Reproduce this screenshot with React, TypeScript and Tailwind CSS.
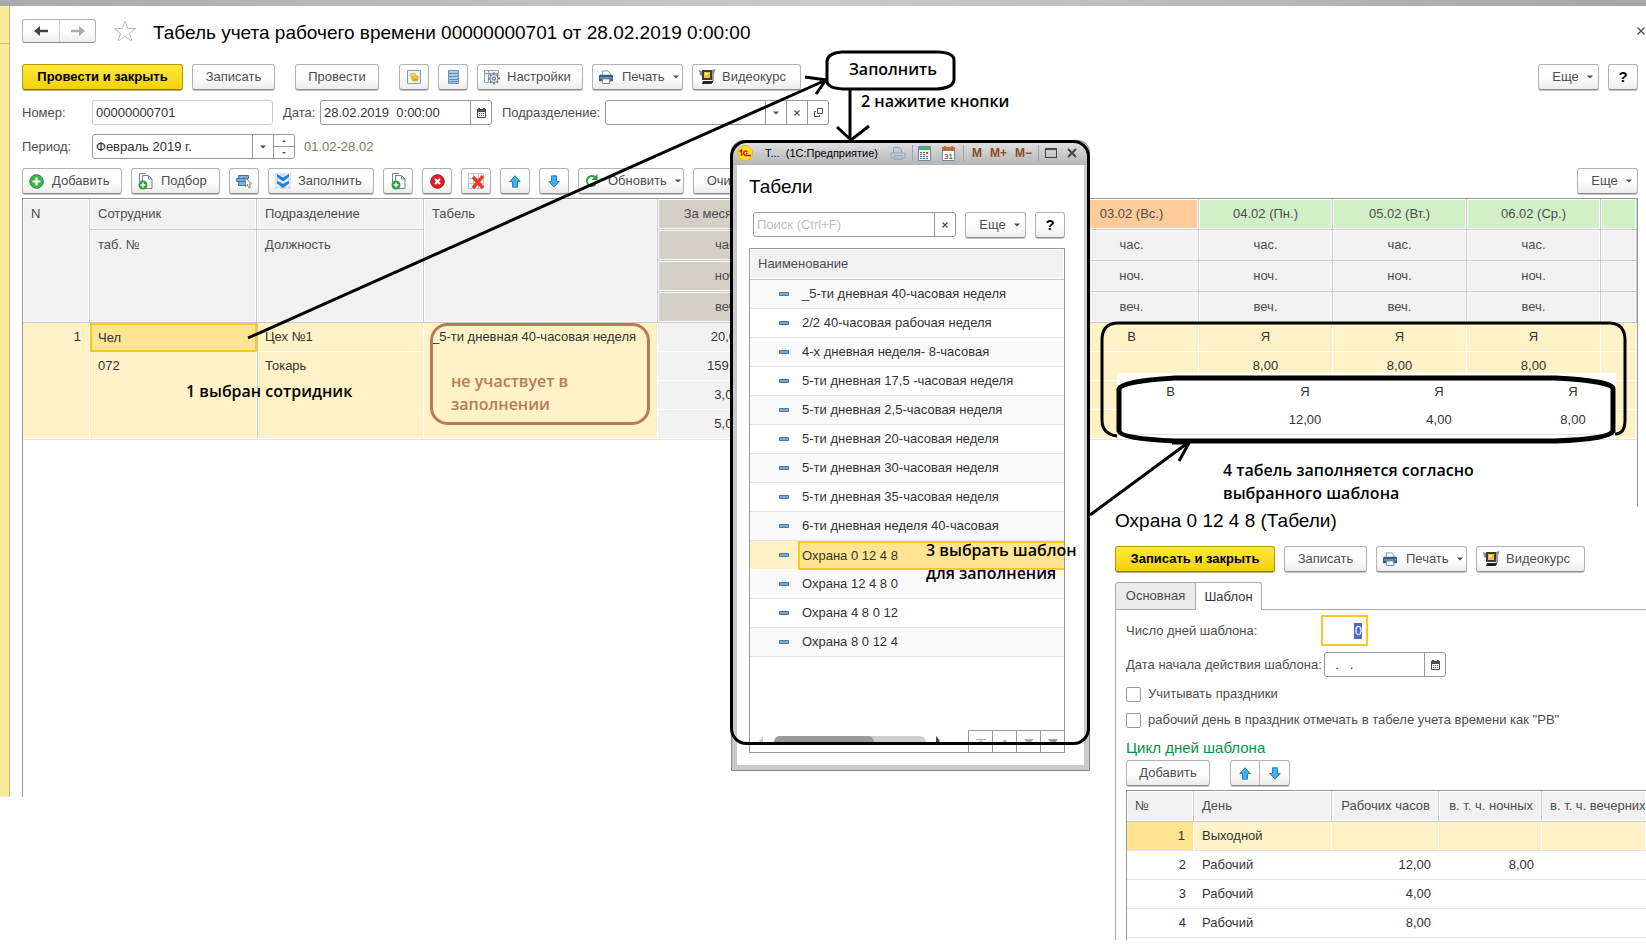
import { ReactNode } from "react";

const templates = [
    "_5-ти дневная 40-часовая неделя",
    "2/2 40-часовая рабочая неделя",
    "4-х дневная неделя- 8-часовая",
    "5-ти дневная 17,5 -часовая неделя",
    "5-ти дневная 2,5-часовая неделя",
    "5-ти дневная 20-часовая неделя",
    "5-ти дневная 30-часовая неделя",
    "5-ти дневная 35-часовая неделя",
    "6-ти дневная неделя 40-часовая",
    "Охрана 0 12 4 8",
    "Охрана 12 4 8 0",
    "Охрана 4 8 0 12",
    "Охрана 8 0 12 4",
];

// the first two days are fully covered by the dialog
const days = [
    { title: "", color: "bg-[#d2f0c8]", code: "", hours: "" },
    { title: "", color: "bg-[#ffcc99]", code: "", hours: "" },
    { title: "03.02 (Вс.)", color: "bg-[#ffcc99]", code: "В", hours: "" },
    { title: "04.02 (Пн.)", color: "bg-[#d2f0c8]", code: "Я", hours: "8,00" },
    { title: "05.02 (Вт.)", color: "bg-[#d2f0c8]", code: "Я", hours: "8,00" },
    { title: "06.02 (Ср.)", color: "bg-[#d2f0c8]", code: "Я", hours: "8,00" },
    { title: "", color: "bg-[#d2f0c8]", code: "", hours: "" },
];

const cycle = [
    { n: 1, day: "Выходной", hours: "", night: "" },
    { n: 2, day: "Рабочий", hours: "12,00", night: "8,00" },
    { n: 3, day: "Рабочий", hours: "4,00", night: "" },
    { n: 4, day: "Рабочий", hours: "8,00", night: "" },
];

const head = "border-r border-b border-[#c8c8c8] font-normal text-[#4d4d4d] shadow-[inset_0_0_0_1px_white]";
const body = "border-r border-b border-white bg-[#fff2c7] text-[#333]";
const note = "absolute whitespace-nowrap font-['Open_Sans',sans-serif] text-[16px] leading-[23px] font-semibold";

function Btn({ children, className = "", label }: { children: ReactNode; className?: string; label?: string }) {
    return (
        <button
            type="button"
            aria-label={label}
            className={`flex h-[26px] shrink-0 items-center justify-center gap-2 whitespace-nowrap rounded-[3px] border border-[#b3b3b3] border-b-[#8c8c8c] bg-linear-to-b from-white from-50% to-[#ececec] text-[#4d4d4d] shadow-[0_1px_0_#c4c4c4] ${className}`}
        >
            {children}
        </button>
    );
}

function IconBtn({ icon, children, className = "" }: { icon: ReactNode; children: ReactNode; className?: string }) {
    return (
        <button
            type="button"
            className={`flex h-[26px] shrink-0 items-center gap-2 whitespace-nowrap rounded-[3px] border border-[#b3b3b3] border-b-[#8c8c8c] bg-linear-to-b from-white from-50% to-[#ececec] pl-[6px] text-[#4d4d4d] shadow-[0_1px_0_#c4c4c4] ${className}`}
        >
            <span className="-mr-2 w-[23px]">{icon}</span>
            {children}
        </button>
    );
}

function MainBtn({ children, className = "" }: { children: ReactNode; className?: string }) {
    return (
        <button
            type="button"
            className={`h-[26px] shrink-0 whitespace-nowrap rounded-[3px] border border-[#b39b00] border-b-[#8c7a00] bg-linear-to-b from-[#ffe838] to-[#f2d200] font-bold text-black shadow-[0_1px_0_#b8ae70] ${className}`}
        >
            {children}
        </button>
    );
}

function Caret() {
    return (
        <svg width="6" height="4" viewBox="0 0 6 4" className="shrink-0">
            <path d="M0 0.5h6L3 3.5z" fill="#4d4d4d" />
        </svg>
    );
}

function CalendarIcon() {
    return (
        <svg width="9" height="10" viewBox="0 0 9 10" className="shrink-0">
            <path d="M.5 2.500h8v7h-8z" fill="white" stroke="#4d4d4d" />
            <path d="M0 1h9v3H0zM1 0h2v2H1zM6 0h2v2H6z" fill="#4d4d4d" />
            <path d="M2 5h1v1H2zM4 5h1v1H4zM6 5h1v1H6zM2 7h1v1H2zM4 7h1v1H4zM6 7h1v1H6z" fill="#4d4d4d" />
        </svg>
    );
}

function CrossIcon() {
    return (
        <svg width="6" height="6" viewBox="0 0 6 6" className="shrink-0">
            <path d="M.5.5l5 5M5.5.5l-5 5" stroke="#4d4d4d" strokeWidth="1.200" />
        </svg>
    );
}

function PrinterIcon() {
    return (
        <svg width="14" height="14" viewBox="0 0 15 15" className="block">
            <path d="M3.500 6V1h6l2.500 2.500V6" fill="white" stroke="#7f96a8" />
            <path d="M1.500 5h12Q15 5 15 6.500V12H0V6.500Q0 5 1.500 5z" fill="#33608a" />
            <path d="M1 8h13v1H1z" fill="#9dbbd3" />
            <path d="M3.500 9.500h8v5h-8z" fill="white" stroke="#5f7f99" />
        </svg>
    );
}

function VideoIcon() {
    return (
        <svg width="17" height="16" viewBox="0 0 17 16" className="block">
            <path d="M0 1l3 1v5L1 6zM16.500 0L13 1v5l2-1z" fill="#8d8d8d" />
            <path d="M3 1h10v10H3z" fill="#3a3a3a" />
            <path d="M5 3h6v6H5z" fill="#f4c21c" />
            <path d="M6 4h3v2H6z" fill="#fff1a8" />
            <path d="M4 12h9l1-1v2l-1.500 2H3z" fill="#222" />
            <path d="M13 3h2v9h-2z" fill="#9a9a9a" />
        </svg>
    );
}

function ArrowIcon({ down }: { down?: boolean }) {
    return (
        <svg width="12" height="13" viewBox="0 0 12 13" className={down ? "shrink-0 rotate-180" : "shrink-0"}>
            <path d="M6 .8l5.200 5.700H8.500v5.700h-5V6.500H.8z" fill="#3fb0f0" stroke="#2a83bd" />
        </svg>
    );
}

function PlusCircle() {
    return (
        <svg width="15" height="15" viewBox="0 0 15 15" className="block">
            <circle cx="7.500" cy="7.500" r="6.800" fill="#3cb54a" stroke="#23883a" />
            <path d="M7.500 3.500v8M3.500 7.500h8" stroke="white" strokeWidth="2.200" />
        </svg>
    );
}

function DocPlusIcon() {
    return (
        <svg width="15" height="17" viewBox="0 0 15 17" className="block">
            <path d="M1.500 9V.5H8M4.500 12V2.500h6l3.500 3.500v9.500H7" fill="none" stroke="#6b87a0" />
            <path d="M10.500 2.500V6H14" fill="none" stroke="#6b87a0" />
            <circle cx="5" cy="12" r="4.500" fill="#2f9e41" />
            <path d="M5 9.500v5M2.500 12h5" stroke="white" strokeWidth="1.500" />
        </svg>
    );
}

function CopyRowsIcon() {
    return (
        <svg width="16" height="15" viewBox="0 0 16 15" className="shrink-0">
            <path d="M2.500 1.500h10v3h-10zM.5 4.500h11v3H.5zM2.500 7.500h9v4h-9z" fill="#7fb0d8" stroke="#3c739f" />
            <path d="M9.500 3.500v9l2-2 1.500 3.500 1.500-.7-1.500-3.300h2.500z" fill="white" stroke="#777" strokeWidth=".8" />
        </svg>
    );
}

function FillIcon() {
    return (
        <svg width="16" height="16" viewBox="0 0 16 16" className="block">
            <path d="M0 0h16v16H0z" fill="#d5dcef" />
            <path d="M4 0v16M12 0v16M0 4h16M0 8h16M0 12h16" stroke="white" />
            <path d="M2 1l6 3.500L14 1v3L8 8.500 2 4zM2 7.500l6 3.500 6-3.500v3L8 15 2 10.500z" fill="#1d82e0" />
        </svg>
    );
}

function DeleteIcon() {
    return (
        <svg width="15" height="15" viewBox="0 0 15 15" className="shrink-0">
            <circle cx="7.500" cy="7.500" r="6.800" fill="#d9222c" stroke="#a3131c" />
            <path d="M5 5l5 5M10 5l-5 5" stroke="white" strokeWidth="2" />
        </svg>
    );
}

function ClearGridIcon() {
    return (
        <svg width="17" height="16" viewBox="0 0 17 16" className="shrink-0">
            <path d="M.5.5h15v15H.5zM5.500.5v15M10.500.5v15M.5 5.500h15M.5 10.500h15" fill="#f4f6fb" stroke="#b9c4d9" />
            <path d="M5 4l10 11M15 3L5 15" stroke="#ee3a22" strokeWidth="3.500" />
        </svg>
    );
}

function CoinsIcon() {
    return (
        <svg width="14" height="14" viewBox="0 0 14 14" className="shrink-0">
            <path d="M.5.5h13v13H.5z" fill="#eef5fa" stroke="#7f9db5" />
            <ellipse cx="8" cy="9.500" rx="3.500" ry="1.800" fill="#e6a41b" />
            <ellipse cx="8" cy="7.500" rx="3.500" ry="1.700" fill="#f5c73d" stroke="#cf8f18" strokeWidth=".6" />
            <ellipse cx="6" cy="5" rx="3.200" ry="1.700" fill="#ffd95a" stroke="#cf8f18" strokeWidth=".6" />
        </svg>
    );
}

function ListIcon() {
    return (
        <svg width="11" height="14" viewBox="0 0 11 14" className="shrink-0">
            <path d="M.5.5h10v13H.5z" fill="#a9cbe6" stroke="#6d93b3" />
            <path d="M1 3.500h9M1 6.500h9M1 9.500h9M1 11.500h9" stroke="#5f8cb3" />
        </svg>
    );
}

function SettingsIcon() {
    return (
        <svg width="17" height="16" viewBox="0 0 17 16" className="block">
            <path d="M.5 1.500h4v12h-4zM.5 1.500h14v3H.5z" fill="#eef3f8" stroke="#8ea5bd" />
            <path d="M10 3.500v12M4 9.500h12M5.800 5.300l8.400 8.400M14.200 5.300l-8.400 8.400" stroke="#6f7f91" strokeWidth="2" />
            <circle cx="10" cy="9.500" r="4" fill="white" stroke="#6f7f91" />
            <circle cx="10" cy="9.500" r="1.600" fill="white" stroke="#6f7f91" strokeWidth="1.400" />
        </svg>
    );
}

function RefreshIcon() {
    return (
        <svg width="14" height="14" viewBox="0 0 14 14" className="block">
            <path d="M10.500 10.500A5 5 0 1 1 10 3" fill="none" stroke="#27a13c" strokeWidth="2" />
            <path d="M12.500 0v6h-6z" fill="#27a13c" />
        </svg>
    );
}

function ElementIcon() {
    return (
        <svg width="10" height="4" viewBox="0 0 10 4" className="block">
            <path d="M.5.5h9v3h-9z" fill="#79abd6" stroke="#44759c" />
        </svg>
    );
}

function Field({ id, value, width, light, children }: { id: string; value: string; width: string; light?: boolean; children?: ReactNode }) {
    return (
        <div className={`flex h-[25px] shrink-0 overflow-hidden rounded-[3px] border bg-white ${light ? "border-[#ccc]" : "border-[#999]"}`}>
            <input id={id} defaultValue={value} className={`min-w-0 bg-transparent px-[3px] text-[#333] outline-none ${width}`} />
            {children}
        </div>
    );
}

function FieldBtn({ children, label }: { children: ReactNode; label: string }) {
    return (
        <button type="button" aria-label={label} className="flex w-[21px] shrink-0 items-center justify-center border-l border-[#999]">
            {children}
        </button>
    );
}

function TimesheetTable() {
    return (
        <table className="w-full table-fixed border-separate border-spacing-0">
            <colgroup>
                <col className="w-[67px]" />
                <col className="w-[167px]" />
                <col className="w-[167px]" />
                <col className="w-[234px]" />
                <col className="w-[139px]" />
                <col className="w-[134px]" />
                <col className="w-[134px]" />
                <col className="w-[134px]" />
                <col className="w-[134px]" />
                <col className="w-[134px]" />
                <col className="w-[134px]" />
                <col />
            </colgroup>
            <thead>
                <tr className="h-[31px]">
                    <th rowSpan={4} className={`${head} bg-[#f1f1f1] px-2 pt-[7px] text-left align-top`}>N</th>
                    <th className={`${head} bg-[#f1f1f1] px-2 text-left`}>Сотрудник</th>
                    <th className={`${head} bg-[#f1f1f1] px-2 text-left`}>Подразделение</th>
                    <th rowSpan={4} className={`${head} bg-[#f1f1f1] px-2 pt-[7px] text-left align-top`}>Табель</th>
                    <th className={`${head} bg-[#d4cfc7]`}>За месяц (дн.)</th>
                    {days.map((d, i) => (
                        <th key={i} className={`${head} ${d.color}`}>{d.title}</th>
                    ))}
                </tr>
                {["час.", "ноч.", "веч."].map((t, row) => (
                    <tr key={t} className="h-[31px]">
                        {row === 0 && (
                            <>
                                <th rowSpan={3} className={`${head} bg-[#f1f1f1] px-2 pt-[7px] text-left align-top`}>таб. №</th>
                                <th rowSpan={3} className={`${head} bg-[#f1f1f1] px-2 pt-[7px] text-left align-top`}>Должность</th>
                            </>
                        )}
                        <th className={`${head} bg-[#d4cfc7]`}>{t}</th>
                        {days.map((d, i) => (
                            <th key={i} className={`${head} bg-[#f1f1f1]`}>{d.title ? t : ""}</th>
                        ))}
                    </tr>
                ))}
            </thead>
            <tbody>
                <tr className="h-[29px]">
                    <td rowSpan={4} className={`${body} px-2 pt-[6px] text-right align-top`}>1</td>
                    <td className="border-2 border-[#fbc91d] bg-[#ffe591] px-[6px] text-[#333]">Чел</td>
                    <td className={`${body} border-l border-l-[#c8c8c8] px-[7px]`}>Цех №1</td>
                    <td rowSpan={4} className={`${body} px-2 pt-[6px] align-top`}>_5-ти дневная 40-часовая неделя</td>
                    <td className="border-r border-b border-white bg-[#f2f2f2] text-center text-[#333]">20,00</td>
                    {days.map((d, i) => (
                        <td key={i} className={`${body} text-center`}>{d.code}</td>
                    ))}
                </tr>
                {["159,00", "3,00", "5,00"].map((t, row) => (
                    <tr key={t} className="h-[29px]">
                        {row === 0 && (
                            <>
                                <td rowSpan={3} className={`${body} px-2 pt-[6px] align-top`}>072</td>
                                <td rowSpan={3} className={`${body} border-l border-l-[#c8c8c8] px-[7px] pt-[6px] align-top`}>Токарь</td>
                            </>
                        )}
                        <td className="border-r border-b border-white bg-[#f2f2f2] text-center text-[#333]">{t}</td>
                        {days.map((d, i) => (
                            <td key={i} className={`${body} text-center`}>{row === 0 ? d.hours : ""}</td>
                        ))}
                    </tr>
                ))}
            </tbody>
        </table>
    );
}

function MainWindow() {
    return (
        <div className="flex h-[791px]">
            <div className="w-[10px] shrink-0 border-r border-[#c9bd6c] bg-[#fbeb9e]">
                <div className="h-[38px] border-b border-[#c9bd6c]" />
            </div>
            <main className="flex min-w-0 grow flex-col pt-3 pr-2 pl-3">
                <div className="flex h-[26px] items-center">
                    <div className="flex h-6 rounded-[3px] border border-[#b3b3b3] border-b-[#8c8c8c] bg-linear-to-b from-white from-50% to-[#ececec]">
                        <button type="button" aria-label="Назад" className="flex w-[36px] items-center justify-center">
                            <svg width="14" height="10" viewBox="0 0 14 10">
                                <path d="M0 5l6-5v3.800h8v2.400H6V10z" fill="#444" />
                            </svg>
                        </button>
                        <button type="button" aria-label="Вперед" className="flex w-[36px] items-center justify-center border-l border-[#ccc]">
                            <svg width="14" height="10" viewBox="0 0 14 10">
                                <path d="M14 5L8 0v3.800H0v2.400h8V10z" fill="#aaa" />
                            </svg>
                        </button>
                    </div>
                    <svg width="24" height="22" viewBox="0 0 24 22" className="ml-[17px]">
                        <path d="M12 1l2.800 7.500h8L16.500 13.200l2.400 7.800-6.900-4.700-6.900 4.700 2.400-7.800L1.200 8.500h8z" fill="white" stroke="#b4b9c2" />
                    </svg>
                    <h1 className="ml-4 whitespace-nowrap pt-1 text-[19px] text-black">Табель учета рабочего времени 00000000701 от 28.02.2019 0:00:00</h1>
                    <button type="button" aria-label="Закрыть" className="-mr-2 ml-auto flex size-[10px] items-center justify-center">
                        <svg width="8" height="8" viewBox="0 0 8 8">
                            <path d="M.5.5l7 7M7.500.5l-7 7" stroke="#4d4d4d" strokeWidth="1.300" />
                        </svg>
                    </button>
                </div>

                <div className="mt-5 flex gap-[9px]">
                    <MainBtn className="w-[161px]">Провести и закрыть</MainBtn>
                    <Btn className="w-[83px]">Записать</Btn>
                    <Btn className="ml-[11px] w-[84px]">Провести</Btn>
                    <Btn className="ml-[11px] w-[30px]" label="Начисления"><CoinsIcon /></Btn>
                    <Btn className="w-[30px]" label="Список"><ListIcon /></Btn>
                    <IconBtn className="w-[106px]" icon={<SettingsIcon />}>Настройки</IconBtn>
                    <IconBtn className="w-[91px]" icon={<PrinterIcon />}>Печать<Caret /></IconBtn>
                    <IconBtn className="w-[109px]" icon={<VideoIcon />}>Видеокурс</IconBtn>
                    <Btn className="ml-auto w-[61px] pl-2">Еще<Caret /></Btn>
                    <Btn className="w-[30px] text-[15px] font-bold text-black">?</Btn>
                </div>

                <div className="mt-[10px] flex items-center text-[#4d4d4d]">
                    <label htmlFor="number" className="w-[70px]">Номер:</label>
                    <Field id="number" value="00000000701" width="w-[179px]" light />
                    <label htmlFor="date" className="ml-[10px] w-[37px]">Дата:</label>
                    <Field id="date" value="28.02.2019  0:00:00" width="w-[149px]">
                        <FieldBtn label="Выбрать дату"><CalendarIcon /></FieldBtn>
                    </Field>
                    <label htmlFor="dept" className="ml-[10px] w-[103px]">Подразделение:</label>
                    <Field id="dept" value="" width="w-[159px]">
                        <FieldBtn label="Выбрать"><Caret /></FieldBtn>
                        <FieldBtn label="Очистить"><CrossIcon /></FieldBtn>
                        <FieldBtn label="Открыть">
                            <svg width="9" height="9" viewBox="0 0 9 9">
                                <path d="M3.500.5h5v5h-5zM2 3.500H.5v5h5V7" fill="none" stroke="#4d4d4d" />
                            </svg>
                        </FieldBtn>
                    </Field>
                </div>

                <div className="mt-[9px] flex items-center text-[#4d4d4d]">
                    <label htmlFor="period" className="w-[70px]">Период:</label>
                    <Field id="period" value="Февраль 2019 г." width="w-[159px]">
                        <FieldBtn label="Выбрать период"><Caret /></FieldBtn>
                        <div className="flex w-[21px] flex-col border-l border-[#999]">
                            <button type="button" aria-label="Следующий" className="flex grow items-center justify-center border-b border-[#999]">
                                <svg width="4" height="2" viewBox="0 0 4 2"><path d="M0 2h4L2 0z" fill="#4d4d4d" /></svg>
                            </button>
                            <button type="button" aria-label="Предыдущий" className="flex grow items-center justify-center">
                                <svg width="4" height="2" viewBox="0 0 4 2"><path d="M0 0h4L2 2z" fill="#4d4d4d" /></svg>
                            </button>
                        </div>
                    </Field>
                    <span className="ml-[9px] text-[#7f7a50]">01.02-28.02</span>
                </div>

                <div className="mt-[9px] flex gap-[9px]">
                    <IconBtn className="w-[100px]" icon={<PlusCircle />}>Добавить</IconBtn>
                    <IconBtn className="w-[89px]" icon={<DocPlusIcon />}>Подбор</IconBtn>
                    <Btn className="w-[30px]" label="Выбрать строки"><CopyRowsIcon /></Btn>
                    <IconBtn className="w-[106px]" icon={<FillIcon />}>Заполнить</IconBtn>
                    <Btn className="w-[30px]" label="Скопировать"><DocPlusIcon /></Btn>
                    <Btn className="w-[30px]" label="Удалить"><DeleteIcon /></Btn>
                    <Btn className="w-[30px]" label="Очистить таблицу"><ClearGridIcon /></Btn>
                    <Btn className="w-[30px]" label="Вверх"><ArrowIcon /></Btn>
                    <Btn className="w-[30px]" label="Вниз"><ArrowIcon down /></Btn>
                    <IconBtn className="w-[106px]" icon={<RefreshIcon />}>Обновить<Caret /></IconBtn>
                    <Btn className="w-[84px]">Очистить</Btn>
                    <Btn className="ml-auto w-[61px] pl-2">Еще<Caret /></Btn>
                </div>

                <div className="mt-1 min-h-0 grow overflow-hidden border-x border-t border-[#999]">
                    <TimesheetTable />
                    <div className="border-t border-[#e6e6e6]" />
                </div>
            </main>
        </div>
    );
}

function TemplatesDialog() {
    return (
        <section className="absolute top-[140px] left-[731px] flex h-[631px] w-[359px] flex-col rounded-t-xl border border-[#8a8a8a] bg-[#c9cacc] px-[5px] pb-[5px]">
            <div className="-mx-[5px] flex h-6 shrink-0 items-center rounded-t-xl bg-linear-to-b from-[#e4e4e5] to-[#b3b4b7] pl-[5px] text-[12px] text-black">
                <svg width="16" height="16" viewBox="0 0 16 16" className="shrink-0">
                    <circle cx="8" cy="8" r="7.500" fill="#fde02f" stroke="#e9b51c" />
                    <path d="M2.500 6.500L4.500 5v6M10.500 6.500A2.300 2.300 0 1 0 9 10.500h5M10.500 8.500H9" fill="none" stroke="#e31b1b" strokeWidth="1.500" />
                </svg>
                <span className="ml-3 w-[111px] shrink-0 whitespace-pre text-[11px]">Т...  (1С:Предприятие)</span>
                <svg width="16" height="14" viewBox="0 0 16 14" className="ml-[14px] shrink-0">
                    <path d="M3.500 7V1.500h6l2 2V7M1 7h14v5H1zM4 9.500h8v4H4z" fill="#c3cad3" stroke="#98a6b5" />
                </svg>
                <span className="ml-[6px] h-4 w-px bg-[#a3a3a3]" />
                <svg width="13" height="15" viewBox="0 0 13 15" className="ml-[5px] shrink-0">
                    <path d="M.5.5h12v14H.5z" fill="#eef2f4" stroke="#6f8a9d" />
                    <path d="M1 1h11v3H1z" fill="#3fbf4b" />
                    <path d="M2 6h2v1H2zM5 6h2v1H5zM2 8h2v1H2zM5 8h2v1H5zM2 10h2v1H2zM5 10h2v1H5zM8 10h2v1H8zM2 12h2v1H2zM5 12h2v1H5zM8 12h2v1H8z" fill="#4c6a80" />
                    <path d="M8 6h2v2H8z" fill="#e33" />
                </svg>
                <svg width="13" height="15" viewBox="0 0 13 15" className="ml-[11px] shrink-0">
                    <path d="M.5 1.500h12v13H.5z" fill="white" stroke="#6f8a9d" />
                    <path d="M0 1h13v4H0zM2 0h2v2H2zM9 0h2v2H9z" fill="#b76f3c" />
                    <text x="6.500" y="12.500" textAnchor="middle" fontSize="8" fill="#333">31</text>
                </svg>
                <span className="ml-[8px] h-4 w-px bg-[#a3a3a3]" />
                <div className="ml-2 flex gap-2 font-bold text-[#8a4b20]">
                    <span>M</span>
                    <span>M+</span>
                    <span>M−</span>
                </div>
                <span className="ml-[6px] h-4 w-px bg-[#a3a3a3]" />
                <button type="button" aria-label="Развернуть" className="ml-[6px] h-[10px] w-3 shrink-0 border border-t-2 border-[#444]" />
                <button type="button" aria-label="Закрыть окно" className="ml-[10px] shrink-0">
                    <svg width="10" height="10" viewBox="0 0 10 10">
                        <path d="M1 1l8 8M9 1L1 9" stroke="#444" strokeWidth="2" />
                    </svg>
                </button>
            </div>

            <div className="flex min-h-0 grow flex-col bg-white px-3 pt-[10px] pb-3">
                <h2 className="text-[19px] leading-6 text-black">Табели</h2>
                <div className="mt-[13px] flex pl-1">
                    <div className="flex h-[25px] w-[203px] rounded-[3px] border border-[#999]">
                        <input aria-label="Поиск" placeholder="Поиск (Ctrl+F)" className="min-w-0 grow px-[3px] outline-none placeholder:text-[#c0c0c0]" />
                        <FieldBtn label="Очистить поиск"><CrossIcon /></FieldBtn>
                    </div>
                    <Btn className="ml-[9px] w-[61px] pl-2">Еще<Caret /></Btn>
                    <Btn className="ml-[9px] w-[30px] text-[15px] font-bold text-black">?</Btn>
                </div>
                <div className="mt-[10px] flex w-[316px] grow flex-col border border-[#999]">
                    <table className="w-full border-separate border-spacing-0">
                        <thead>
                            <tr className="h-[31px]">
                                <th colSpan={2} className="border-b border-[#c8c8c8] bg-[#f1f1f1] px-2 text-left font-normal text-[#4d4d4d] shadow-[inset_0_0_0_1px_white]">Наименование</th>
                            </tr>
                        </thead>
                        <tbody>
                            {templates.map((name, i) =>
                                i === 9 ? (
                                    <tr key={name} className="h-[29px]">
                                        <td className="w-12 border-b border-white bg-[#fff2c7] pl-[29px]"><ElementIcon /></td>
                                        <td className="border-2 border-r-0 border-[#fbc91d] bg-[#ffe591] px-[2px] text-[#333]">{name}</td>
                                    </tr>
                                ) : (
                                    <tr key={name} className={i % 2 ? "h-[29px] bg-white" : "h-[29px] bg-[#fafafa]"}>
                                        <td className="w-12 border-b border-[#e3e3e3] pl-[29px]"><ElementIcon /></td>
                                        <td className="border-b border-[#e3e3e3] px-1 text-[#333]">{name}</td>
                                    </tr>
                                )
                            )}
                        </tbody>
                    </table>
                    <div className="mt-auto flex h-[22px] items-start pl-[9px]">
                        <svg width="4" height="8" viewBox="0 0 4 8" className="mt-[6px]"><path d="M4 0v8L0 5z" fill="#ccc" /></svg>
                        <div className="mt-[6px] ml-[11px] h-[6px] w-[152px] rounded-t-full bg-[#cfcfcf]">
                            <div className="h-[6px] w-[100px] rounded-t-full bg-[#999]" />
                        </div>
                        <svg width="4" height="8" viewBox="0 0 4 8" className="mt-[6px] ml-[10px]"><path d="M0 0v8l4-3z" fill="#444" /></svg>
                        <div className="ml-auto flex h-full border-t border-[#999]">
                            <button type="button" aria-label="В начало" className="flex w-6 justify-center border-l border-[#999] pt-2">
                                <svg width="10" height="4" viewBox="0 0 10 4"><path d="M0 0h10v1H0zM5 1l3 3H2z" fill="#aaa" /></svg>
                            </button>
                            <button type="button" aria-label="Выше" className="flex w-6 justify-center border-l border-[#999] pt-2">
                                <svg width="10" height="4" viewBox="0 0 10 4"><path d="M5 0l3 4H2z" fill="#aaa" /></svg>
                            </button>
                            <button type="button" aria-label="Ниже" className="flex w-6 justify-center border-l border-[#999] pt-2">
                                <svg width="10" height="4" viewBox="0 0 10 4"><path d="M0 0h10L6 4H4z" fill="#aaa" /></svg>
                            </button>
                            <button type="button" aria-label="В конец" className="flex w-6 justify-center border-l border-[#999] pt-2">
                                <svg width="10" height="4" viewBox="0 0 10 4"><path d="M0 0h10L7 4H3z" fill="#999" /></svg>
                            </button>
                        </div>
                    </div>
                </div>
            </div>
        </section>
    );
}

function TemplateWindow() {
    return (
        <section className="absolute top-[507px] right-0 left-[1105px] h-[433px] overflow-hidden bg-white pl-[10px] text-[#4d4d4d]">
            <h2 className="mt-[2px] text-[19px] leading-6 text-black">Охрана 0 12 4 8 (Табели)</h2>
            <div className="mt-[13px] flex gap-[9px]">
                <MainBtn className="w-[160px]">Записать и закрыть</MainBtn>
                <Btn className="w-[83px]">Записать</Btn>
                <IconBtn className="w-[91px]" icon={<PrinterIcon />}>Печать<Caret /></IconBtn>
                <IconBtn className="w-[109px]" icon={<VideoIcon />}>Видеокурс</IconBtn>
            </div>
            <div className="mt-[10px] flex h-7">
                <button type="button" className="w-[81px] rounded-tl-[3px] border border-[#aaa] bg-[#ebebeb]">Основная</button>
                <button type="button" className="w-[66px] rounded-tr-[3px] border-t border-r border-[#aaa] text-[#333]">Шаблон</button>
                <div className="grow border-b border-[#aaa]" />
            </div>
            <div className="flex flex-col border-l border-[#aaa] pt-[5px] pl-[10px]">
                <div className="flex h-[31px] items-center">
                    <label htmlFor="count" className="w-[195px]">Число дней шаблона:</label>
                    <input
                        id="count"
                        defaultValue="0"
                        className="h-[31px] w-[47px] border-2 border-[#fbc91d] bg-[linear-gradient(#5069c8,#5069c8)] bg-size-[8px_16px] bg-position-[right_4px_center] bg-no-repeat px-1 text-right text-white outline-none"
                    />
                </div>
                <div className="mt-[6px] flex items-center">
                    <label htmlFor="start" className="w-[198px] whitespace-nowrap">Дата начала действия шаблона:</label>
                    <Field id="start" value="  .   ." width="w-[99px]">
                        <FieldBtn label="Выбрать дату начала"><CalendarIcon /></FieldBtn>
                    </Field>
                </div>
                <label className="mt-2 flex h-[18px] items-center gap-[7px]">
                    <input type="checkbox" className="size-[15px] appearance-none rounded-xs border border-[#999] bg-white" />
                    Учитывать праздники
                </label>
                <label className="mt-2 flex h-[18px] items-center gap-[7px] whitespace-nowrap">
                    <input type="checkbox" className="size-[15px] appearance-none rounded-xs border border-[#999] bg-white" />
                    рабочий день в праздник отмечать в табеле учета времени как "РВ"
                </label>
                <h3 className="mt-[9px] text-[15px] leading-5 text-[#009646]">Цикл дней шаблона</h3>
                <div className="mt-[2px] flex gap-5">
                    <Btn className="w-[84px]">Добавить</Btn>
                    <div className="flex h-[26px] rounded-[3px] border border-[#b3b3b3] border-b-[#8c8c8c] bg-linear-to-b from-white from-50% to-[#ececec] shadow-[0_1px_0_#c4c4c4]">
                        <button type="button" aria-label="Вверх" className="flex w-[28px] items-center justify-center"><ArrowIcon /></button>
                        <button type="button" aria-label="Вниз" className="flex w-[30px] items-center justify-center border-l border-[#b3b3b3]"><ArrowIcon down /></button>
                    </div>
                </div>
                <div className="mt-1 h-[160px] border-t border-l border-[#999]">
                    <table className="w-full table-fixed border-separate border-spacing-0">
                        <colgroup>
                            <col className="w-[67px]" />
                            <col className="w-[138px]" />
                            <col className="w-[107px]" />
                            <col className="w-[103px]" />
                            <col />
                        </colgroup>
                        <thead>
                            <tr className="h-[31px] whitespace-nowrap bg-[#f1f1f1]">
                                <th className={`${head} px-2 text-left`}>№</th>
                                <th className={`${head} px-2 text-left`}>День</th>
                                <th className={`${head} px-2 text-right`}>Рабочих часов</th>
                                <th className={`${head} px-2 text-right`}>в. т. ч. ночных</th>
                                <th className={`${head} border-r-0 pl-2 text-left`}>в. т. ч. вечерних</th>
                            </tr>
                        </thead>
                        <tbody>
                            {cycle.map((r, i) => {
                                const cell = i === 0 ? "border-r border-b border-r-white border-b-[#e3e3e3] bg-[#fff2c7] px-2" : "border-b border-[#e3e3e3] px-2";
                                return (
                                    <tr key={r.n} className="h-[29px] text-[#333]">
                                        <td className={i === 0 ? "border-r border-b border-r-white border-b-[#e3e3e3] bg-[#ffe591] px-2 text-right" : `${cell} text-right`}>{r.n}</td>
                                        <td className={cell}>{r.day}</td>
                                        <td className={`${cell} text-right`}>{r.hours}</td>
                                        <td className={`${cell} text-right`}>{r.night}</td>
                                        <td className={cell} />
                                    </tr>
                                );
                            })}
                        </tbody>
                    </table>
                </div>
            </div>
        </section>
    );
}

// fragment of the filled timesheet, laid over the main one
function ResultFragment() {
    return (
        <div className="absolute top-[373px] left-[1117px] flex h-[66px] w-[499px] flex-col justify-center overflow-hidden bg-white text-center text-[#333]">
            <div className="flex h-[29px] items-center">
                <span className="w-[121px] shrink-0 pr-[14px]">В</span>
                <span className="w-[134px] shrink-0">Я</span>
                <span className="w-[134px] shrink-0">Я</span>
                <span className="w-[134px] shrink-0">Я</span>
            </div>
            <div className="flex h-[29px] items-center border-b border-[#e3e3e3]">
                <span className="w-[121px] shrink-0" />
                <span className="w-[134px] shrink-0">12,00</span>
                <span className="w-[134px] shrink-0">4,00</span>
                <span className="w-[134px] shrink-0">8,00</span>
            </div>
        </div>
    );
}

function Annotations() {
    return (
        <>
            <svg width="1646" height="950" viewBox="0 0 1646 950" fill="none" stroke="black" strokeWidth="3" className="pointer-events-none absolute top-0 left-0">
                <path d="M248 338L826 80M805 77l21 3-10 14" />
                <path d="M850 89v51M837 127l14 13 18-14" />
                <path d="M842 52h97q15 1 15 8v20q-1 8-17 9h-94q-16-1-16-8V61q1-8 15-9z" fill="white" />
                <rect x="731.500" y="141.500" width="357" height="602" rx="15" />
                <path d="M1117 436q-15-2-15-16v-80q0-16 15-17h493q15 1 15 17v80q0 14-10 14" />
                <path d="M1090 515l99-73M1172 443h17l-10 18" />
                <path d="M1175 378h380q58 3 58 11v42q-3 8-58 10h-380q-54-2-56-10v-42q2-8 56-11z" strokeWidth="5" />
                <rect x="431.500" y="324.500" width="217" height="99" rx="16" stroke="#b97a57" />
            </svg>
            <p className={`${note} top-[58px] left-[849px]`}>Заполнить</p>
            <p className={`${note} top-[90px] left-[861px]`}>2 нажитие кнопки</p>
            <p className={`${note} top-[380px] left-[186px]`}>1 выбран сотридник</p>
            <p className={`${note} top-[370px] left-[451px] text-[#b97a57]`}>не участвует в<br />заполнении</p>
            <p className={`${note} top-[539px] left-[926px]`}>3 выбрать шаблон<br />для заполнения</p>
            <p className={`${note} top-[459px] left-[1223px]`}>4 табель заполняется согласно<br />выбранного шаблона</p>
        </>
    );
}

export default function App() {
    return (
        <div className="relative min-h-screen overflow-hidden bg-white font-['Liberation_Sans',Arial,sans-serif] text-[13px] leading-4">
            <div className="h-[6px] bg-linear-to-r from-[#a9aaad] via-[#cbcbcb] to-[#a5a6a9]" />
            <MainWindow />
            <ResultFragment />
            <TemplateWindow />
            <TemplatesDialog />
            <Annotations />
        </div>
    );
}
